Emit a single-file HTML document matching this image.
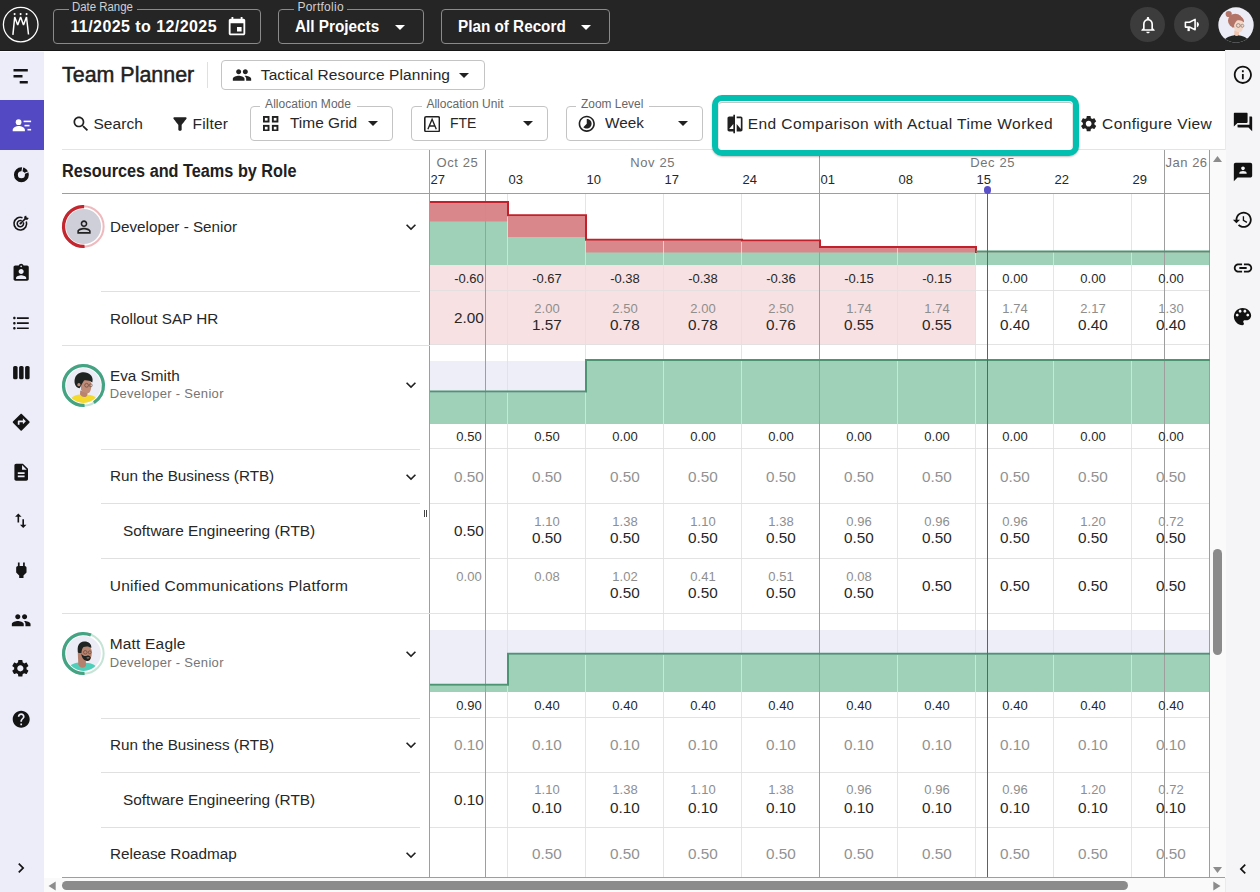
<!DOCTYPE html>
<html><head><meta charset="utf-8"><title>Team Planner</title>
<style>
html,body{margin:0;padding:0;}
body{width:1260px;height:892px;position:relative;overflow:hidden;background:#fff;font-family:"Liberation Sans",sans-serif;}
.t{position:absolute;white-space:nowrap;}
div,svg,span{box-sizing:border-box;}
.n{position:absolute;width:78px;text-align:center;white-space:nowrap;}
</style></head><body>

<div style="position:absolute;left:0px;top:0px;width:1260px;height:51px;background:#252525;border-bottom:1px solid #161616;"></div>
<svg style="position:absolute;left:0px;top:0px" width="44" height="50" viewBox="0 0 44 50"><circle cx="20.700" cy="24.600" r="17.300" fill="none" stroke="#fff" stroke-width="1.300"/><path d="M12.900 34.800L14.700 17L17.700 24.900L20.600 17L23.500 24.900L26.500 17L28.500 34.500" fill="none" stroke="#fff" stroke-width="1.500" stroke-linejoin="bevel"/><circle cx="14.600" cy="14.100" r="1.050" fill="#fff"/><circle cx="20.600" cy="14.100" r="1.050" fill="#fff"/><circle cx="26.600" cy="14.100" r="1.050" fill="#fff"/></svg>
<div style="position:absolute;left:53px;top:9px;width:208px;height:35px;border:1px solid #8a8a8a;border-radius:4px;"></div>
<div style="position:absolute;left:69px;top:8px;width:67.7px;height:4px;background:#252525;"></div>
<span id="t1" class="t" style="left:72.4px;top:0px;font-size:12px;line-height:14px;color:#d0d0d0;transform:scaleX(0.9509);transform-origin:0 50%;">Date Range</span>
<span id="t2" class="t" style="left:70.4px;top:16.6px;font-size:16px;line-height:20px;color:#fff;font-weight:700;letter-spacing:0.436px;">11/2025 to 12/2025</span>
<svg style="position:absolute;left:226.2px;top:16px;" width="22" height="22" viewBox="0 0 24 24"><path fill="#fff" d="M17 12h-5v5h5v-5zM16 1v2H8V1H6v2H5c-1.110 0-1.990.900-1.990 2L3 19c0 1.100.890 2 2 2h14c1.100 0 2-.900 2-2V5c0-1.100-.900-2-2-2h-1V1h-2zm3 18H5V8h14v11z"/></svg>
<div style="position:absolute;left:278px;top:9px;width:146px;height:35px;border:1px solid #8a8a8a;border-radius:4px;"></div>
<div style="position:absolute;left:294px;top:8px;width:53px;height:4px;background:#252525;"></div>
<span id="t3" class="t" style="left:297.4px;top:0px;font-size:12px;line-height:14px;color:#d0d0d0;letter-spacing:0.271px;">Portfolio</span>
<span id="t4" class="t" style="left:295.4px;top:16.6px;font-size:16px;line-height:20px;color:#fff;font-weight:700;transform:scaleX(0.9565);transform-origin:0 50%;">All Projects</span>
<svg style="position:absolute;left:388px;top:14.5px;" width="24" height="24" viewBox="0 0 24 24"><path fill="#fff" d="M7 10l5 5 5-5z"/></svg>
<div style="position:absolute;left:441px;top:9px;width:169px;height:35px;border:1px solid #8a8a8a;border-radius:4px;"></div>
<span id="t5" class="t" style="left:458.4px;top:16.6px;font-size:16px;line-height:20px;color:#fff;font-weight:700;transform:scaleX(0.9539);transform-origin:0 50%;">Plan of Record</span>
<svg style="position:absolute;left:574px;top:14.5px;" width="24" height="24" viewBox="0 0 24 24"><path fill="#fff" d="M7 10l5 5 5-5z"/></svg>
<div style="position:absolute;left:1130px;top:6.9px;width:35px;height:35px;border-radius:50%;background:#3c3c3c;"></div>
<div style="position:absolute;left:1173.9px;top:6.9px;width:35px;height:35px;border-radius:50%;background:#3c3c3c;"></div>
<svg style="position:absolute;left:1138.3px;top:14.8px;" width="20" height="20" viewBox="0 0 24 24"><path fill="#fff" d="M12 22c1.1 0 2-.9 2-2h-4c0 1.1.9 2 2 2zm6-6v-5c0-3.070-1.630-5.640-4.500-6.320V4c0-.830-.670-1.500-1.500-1.500s-1.500.670-1.500 1.500v.680C7.640 5.360 6 7.920 6 11v5l-2 2v1h16v-1l-2-2zm-2 1H8v-6c0-2.480 1.510-4.500 4-4.500s4 2.020 4 4.500v6z"/></svg>
<svg style="position:absolute;left:1184.300px;top:18.300px" width="16" height="14" viewBox="-.5 -.5 16 14"><path d="M.9 3.800H5L10.600 .9V11.200L5 8.600H.9Z" fill="none" stroke="#fff" stroke-width="1.600" stroke-linejoin="round"/><rect x="3" y="8.600" width="2.300" height="4" fill="#fff"/><path d="M12.300 3.300A2.900 2.900 0 0 1 12.300 8.900Z" fill="#fff"/></svg>
<svg style="position:absolute;left:1217.500px;top:6.700px" width="36" height="36" viewBox="0 0 36 36"><defs><clipPath id="avc"><circle cx="18" cy="18" r="17.700"/></clipPath></defs><circle cx="18" cy="18" r="17.700" fill="#ececf6"/><g clip-path="url(#avc)"><path d="M4 37C6 31 11 29.200 15.500 28.500L18 27.300L21.500 28.500C26 29.200 30.500 31 32.500 37Z" fill="#222423"/><path d="M16.300 23.500H21V28C19.500 29.300 17.800 29.300 16.300 28Z" fill="#f0c4ae"/><ellipse cx="17.300" cy="13.800" rx="7.300" ry="7" fill="#b37468"/><path d="M15.500 13C19 10.500 25 11.500 25.300 16.500C25.500 19.500 25 22.500 23.500 24.500C21.500 26 18 25 16.500 22.500Z" fill="#f4d6c6"/><path d="M14.800 21C12.500 16 14 11 18.500 9.500C23 8.500 26.500 11.500 26 15.500C24 13.300 21.500 12.800 19 13.500C17 15 16.300 18 14.800 21Z" fill="#b37468"/><circle cx="10.700" cy="7" r="3.100" fill="#b37468"/><circle cx="20.300" cy="18.500" r="1.900" fill="none" stroke="#5a5a5a" stroke-width=".55"/><circle cx="24.400" cy="18.800" r="1.500" fill="none" stroke="#5a5a5a" stroke-width=".5"/></g></svg>
<div style="position:absolute;left:0px;top:51px;width:44px;height:1px;background:#fafaff;"></div>
<div style="position:absolute;left:0px;top:52px;width:44px;height:840px;background:#ededf9;"></div>
<div style="position:absolute;left:0px;top:100px;width:44px;height:50px;background:#5349c3;"></div>
<svg style="position:absolute;left:7.800px;top:63.900px" width="24" height="24" viewBox="0 0 24 24"><path fill="#141414" d="M5.500 5h14.300v2.500H5.500zM5.500 11h9v2.500h-9zM11.700 17h8.100v2.500h-8.100z"/></svg>
<svg style="position:absolute;left:8.500px;top:112.500px" width="24" height="24" viewBox="0 0 24 24"><g fill="#fff"><circle cx="9.600" cy="9.200" r="2.850"/><path d="M3.700 18.300v-1.300c0-2.600 4-3.900 6.100-3.900s6.100 1.300 6.100 3.900v1.300z"/><rect x="14.600" y="7.600" width="7.500" height="1.600"/><rect x="15.500" y="11.800" width="5" height="1.600"/><rect x="18.500" y="15.900" width="3.600" height="1.600"/></g></svg>
<svg style="position:absolute;left:8.500px;top:163px" width="24" height="24" viewBox="0 0 24 24"><circle cx="12.400" cy="11.700" r="5.500" fill="none" stroke="#141414" stroke-width="3.900"/><path d="M12.400 11.700L13.900 3M12.400 11.700L20.500 8.300" stroke="#ededf9" stroke-width="1.100"/></svg>
<svg style="position:absolute;left:11px;top:214.100px" width="19" height="19" viewBox="0 0 24 24"><g fill="none" stroke="#141414" stroke-width="2"><path d="M19.300 9.500A8 8 0 1 1 14.500 4.700"/><path d="M15.500 10.500A4 4 0 1 1 13.500 8.500"/><path d="M12 12L18.500 5.500" stroke-width="1.900"/></g><path fill="#141414" d="M16.500 3.500l.8 3.200 3.200.8 2-2.300-2.700-.7-.7-2.700z"/><circle cx="12" cy="12" r="1.400" fill="#141414"/></svg>
<svg style="position:absolute;left:10.95px;top:263.35px;" width="20.3" height="20.3" viewBox="0 0 24 24"><path fill="#141414" d="M19 3h-4.180C14.400 1.840 13.300 1 12 1c-1.300 0-2.400.840-2.820 2H5c-1.100 0-2 .900-2 2v14c0 1.100.900 2 2 2h14c1.100 0 2-.900 2-2V5c0-1.100-.900-2-2-2zm-7 0c.550 0 1 .450 1 1s-.450 1-1 1-1-.450-1-1 .450-1 1-1zm0 4c1.660 0 3 1.340 3 3s-1.340 3-3 3-3-1.340-3-3 1.340-3 3-3zm6 12H6v-1.400c0-2 4-3.100 6-3.100s6 1.100 6 3.100V19z"/></svg>
<svg style="position:absolute;left:10.9px;top:312.55px;" width="20.3" height="20.3" viewBox="0 0 24 24"><path fill="#141414" d="M4 10.5c-.83 0-1.5.67-1.5 1.500s.67 1.500 1.500 1.500 1.500-.67 1.500-1.500-.67-1.500-1.500-1.500zm0-6c-.83 0-1.500.67-1.500 1.500S3.170 7.500 4 7.500 5.500 6.830 5.500 6 4.830 4.500 4 4.500zm0 12c-.83 0-1.500.68-1.500 1.500s.68 1.500 1.500 1.500 1.500-.68 1.500-1.500-.67-1.500-1.500-1.500zM7 19h14v-2H7v2zm0-6h14v-2H7v2zm0-8v2h14V5H7z"/></svg>
<svg style="position:absolute;left:8.500px;top:361px" width="24" height="24" viewBox="0 0 24 24"><g fill="#141414"><rect x="4.100" y="5" width="4.500" height="13.300" rx="1.600"/><rect x="10.100" y="5" width="4.500" height="13.300" rx="1.600"/><rect x="16.100" y="5" width="4.500" height="13.300" rx="1.600"/></g></svg>
<svg style="position:absolute;left:10.6px;top:411.8px;" width="20.4" height="20.4" viewBox="0 0 24 24"><path fill="#141414" d="M21.71 11.29l-9-9c-.39-.39-1.02-.39-1.41 0l-9 9c-.39.39-.39 1.020 0 1.410l9 9c.39.39 1.020.39 1.410 0l9-9c.39-.38.39-1.010 0-1.410zM14 14.500V12h-4v3H8v-4c0-.550.450-1 1-1h5V7.500l3.500 3.500-3.500 3.500z"/></svg>
<svg style="position:absolute;left:10.8px;top:461.7px;" width="20.4" height="20.4" viewBox="0 0 24 24"><path fill="#141414" d="M14 2H6c-1.100 0-1.990.900-1.990 2L4 20c0 1.100.890 2 1.990 2H18c1.100 0 2-.900 2-2V8l-6-6zm2 16H8v-2h8v2zm0-4H8v-2h8v2zm-3-5V3.500L18.500 9H13z"/></svg>
<svg style="position:absolute;left:11.25px;top:510.75px;" width="19.5" height="19.5" viewBox="0 0 24 24"><path fill="#141414" d="M9 3L5 6.990h3V14h2V6.990h3L9 3zm7 14.010V10h-2v7.010h-3L15 21l4-3.990h-3z"/></svg>
<svg style="position:absolute;left:10.65px;top:559.55px;" width="20.7" height="20.7" viewBox="0 0 24 24"><path fill="#141414" d="M16.010 7L16 3h-2v4h-4V3H8v4h-.010C7 6.990 6 7.990 6 8.990v5.490L9.500 18v3h5v-3l3.500-3.510v-5.500c0-1-1-2-1.990-1.990z"/></svg>
<svg style="position:absolute;left:11px;top:609.8px;" width="20.4" height="20.4" viewBox="0 0 24 24"><path fill="#141414" d="M16 11c1.66 0 2.99-1.34 2.99-3S17.66 5 16 5c-1.66 0-3 1.34-3 3s1.34 3 3 3zm-8 0c1.66 0 2.99-1.34 2.99-3S9.66 5 8 5C6.34 5 5 6.34 5 8s1.34 3 3 3zm0 2c-2.33 0-7 1.17-7 3.5V19h14v-2.500c0-2.330-4.670-3.500-7-3.500zm8 0c-.29 0-.62.02-.97.05 1.160.840 1.970 1.970 1.970 3.450V19h6v-2.500c0-2.330-4.670-3.500-7-3.500z"/></svg>
<svg style="position:absolute;left:10.45px;top:658.25px;" width="20.7" height="20.7" viewBox="0 0 24 24"><path fill="#141414" d="M19.14 12.94c.04-.3.06-.61.06-.94 0-.32-.02-.64-.07-.94l2.03-1.58c.18-.14.23-.41.12-.61l-1.92-3.32c-.12-.22-.37-.29-.59-.22l-2.39.96c-.5-.38-1.03-.7-1.62-.94l-.36-2.54c-.04-.24-.24-.41-.48-.41h-3.84c-.24 0-.43.17-.47.41l-.36 2.54c-.59.24-1.13.57-1.62.94l-2.39-.96c-.22-.08-.47 0-.59.22L2.74 8.87c-.12.21-.08.47.12.61l2.03 1.58c-.05.3-.09.63-.09.94s.02.64.07.94l-2.03 1.58c-.18.14-.23.41-.12.61l1.92 3.32c.12.22.37.29.59.22l2.39-.96c.5.38 1.03.7 1.62.94l.36 2.54c.05.24.24.41.48.41h3.84c.24 0 .44-.17.47-.41l.36-2.54c.59-.24 1.13-.56 1.62-.94l2.39.96c.22.08.47 0 .59-.22l1.92-3.32c.12-.22.07-.47-.12-.61l-2.01-1.58zM12 15.6c-1.98 0-3.6-1.62-3.6-3.6s1.62-3.6 3.6-3.6 3.6 1.62 3.6 3.6-1.62 3.6-3.6 3.6z"/></svg>
<svg style="position:absolute;left:10.8px;top:709px;" width="20.4" height="20.4" viewBox="0 0 24 24"><path fill="#141414" d="M12 2C6.48 2 2 6.48 2 12s4.48 10 10 10 10-4.48 10-10S17.52 2 12 2zm1 17h-2v-2h2v2zm2.07-7.75l-.9.92C13.45 12.9 13 13.5 13 15h-2v-.5c0-1.1.45-2.1 1.17-2.83l1.24-1.26c.37-.36.59-.86.59-1.41 0-1.1-.9-2-2-2s-2 .9-2 2H8c0-2.21 1.79-4 4-4s4 1.79 4 4c0 .88-.36 1.68-.93 2.25z"/></svg>
<svg style="position:absolute;left:10.85px;top:857.9px;" width="20" height="20" viewBox="0 0 24 24"><path fill="#141414" d="M10 6L8.590 7.410 13.170 12l-4.580 4.590L10 18l6-6z"/></svg>
<div style="position:absolute;left:1225px;top:50px;width:35px;height:842px;background:#f5f5f7;border-left:1px solid #ebebee;"></div>
<svg style="position:absolute;left:1232.05px;top:63.95px;" width="21.7" height="21.7" viewBox="0 0 24 24"><path fill="#111" d="M11 7h2v2h-2zm0 4h2v6h-2zm1-9C6.48 2 2 6.48 2 12s4.48 10 10 10 10-4.48 10-10S17.52 2 12 2zm0 18c-4.41 0-8-3.590-8-8s3.590-8 8-8 8 3.590 8 8-3.590 8-8 8z"/></svg>
<svg style="position:absolute;left:1231.9px;top:111.4px;" width="22" height="22" viewBox="0 0 24 24"><path fill="#111" d="M21 6h-2v9H6v2c0 .55.45 1 1 1h11l4 4V7c0-.55-.45-1-1-1zm-4 6V3c0-.55-.45-1-1-1H3c-.55 0-1 .45-1 1v14l4-4h10c.55 0 1-.45 1-1z"/></svg>
<svg style="position:absolute;left:1231.9px;top:160.6px;" width="22" height="22" viewBox="0 0 24 24"><path fill="#111" d="M20 2H4c-1.1 0-2 .9-2 2v18l4-4h14c1.1 0 2-.9 2-2V4c0-1.1-.9-2-2-2zm-8 4c1.1 0 2 .9 2 2s-.9 2-2 2-2-.9-2-2 .9-2 2-2zm4 8H8v-.57c0-.81.48-1.53 1.22-1.85.85-.37 1.79-.58 2.78-.58.99 0 1.93.21 2.78.58.74.32 1.22 1.04 1.22 1.850V14z"/></svg>
<svg style="position:absolute;left:1232.15px;top:209.35px;" width="21.5" height="21.5" viewBox="0 0 24 24"><path fill="#111" d="M13 3c-4.97 0-9 4.03-9 9H1l3.89 3.89.07.14L9 12H6c0-3.87 3.13-7 7-7s7 3.13 7 7-3.13 7-7 7c-1.93 0-3.68-.79-4.94-2.06l-1.42 1.42C8.27 19.99 10.51 21 13 21c4.97 0 9-4.03 9-9s-4.03-9-9-9zm-1 5v5l4.28 2.54.72-1.21-3.5-2.08V8H12z"/></svg>
<svg style="position:absolute;left:1231.9px;top:257px;" width="22" height="22" viewBox="0 0 24 24"><path fill="#111" d="M3.9 12c0-1.71 1.39-3.1 3.1-3.1h4V7H7c-2.76 0-5 2.24-5 5s2.24 5 5 5h4v-1.900H7c-1.710 0-3.100-1.390-3.100-3.100zM8 13h8v-2H8v2zm9-6h-4v1.900h4c1.710 0 3.100 1.390 3.100 3.100s-1.390 3.100-3.100 3.100h-4V17h4c2.760 0 5-2.240 5-5s-2.240-5-5-5z"/></svg>
<svg style="position:absolute;left:1231.4px;top:305.3px;" width="23" height="23" viewBox="0 0 24 24"><path fill="#111" d="M12 3c-4.97 0-9 4.03-9 9s4.03 9 9 9c.83 0 1.5-.67 1.5-1.5 0-.39-.15-.74-.39-1.01-.23-.26-.38-.61-.38-.99 0-.83.67-1.5 1.5-1.500H16c2.760 0 5-2.240 5-5 0-4.420-4.030-8-9-8zm-5.500 9c-.830 0-1.500-.670-1.500-1.500S5.670 9 6.500 9 8 9.670 8 10.500 7.330 12 6.500 12zm3-4C8.670 8 8 7.330 8 6.500S8.670 5 9.500 5s1.500.670 1.500 1.500S10.330 8 9.500 8zm5 0c-.830 0-1.500-.670-1.500-1.500S13.670 5 14.500 5s1.500.670 1.500 1.500S15.330 8 14.500 8zm3 4c-.830 0-1.500-.670-1.500-1.500S16.670 9 17.500 9s1.500.670 1.500 1.500-.670 1.500-1.500 1.500z"/></svg>
<svg style="position:absolute;left:1233.1px;top:859.1px;" width="20" height="20" viewBox="0 0 24 24"><path fill="#111" d="M15.410 7.410L14 6l-6 6 6 6 1.410-1.410L10.830 12z"/></svg>
<span id="t6" class="t" style="left:62.1px;top:60.2px;font-size:22.5px;line-height:30px;color:#212121;transform:scaleX(0.9523);transform-origin:0 50%;-webkit-text-stroke:0.500px #212121;">Team Planner</span>
<div style="position:absolute;left:207px;top:62px;width:1px;height:26px;background:#e0e0e0;"></div>
<div style="position:absolute;left:221px;top:60px;width:264px;height:30px;border:1px solid #c4c4c4;border-radius:4px;"></div>
<svg style="position:absolute;left:232px;top:64.5px;" width="20" height="20" viewBox="0 0 24 24"><path fill="#212121" d="M16 11c1.66 0 2.99-1.34 2.99-3S17.66 5 16 5c-1.66 0-3 1.34-3 3s1.34 3 3 3zm-8 0c1.66 0 2.99-1.34 2.99-3S9.66 5 8 5C6.34 5 5 6.34 5 8s1.34 3 3 3zm0 2c-2.33 0-7 1.17-7 3.5V19h14v-2.500c0-2.330-4.670-3.500-7-3.500zm8 0c-.29 0-.62.02-.97.05 1.160.840 1.970 1.970 1.970 3.450V19h6v-2.500c0-2.330-4.670-3.500-7-3.500z"/></svg>
<span id="t7" class="t" style="left:260.8px;top:64.5px;font-size:15.5px;line-height:20px;color:#272727;letter-spacing:0.089px;">Tactical Resource Planning</span>
<svg style="position:absolute;left:452px;top:63px;" width="24" height="24" viewBox="0 0 24 24"><path fill="#212121" d="M7 10l5 5 5-5z"/></svg>
<svg style="position:absolute;left:71px;top:114px;" width="20" height="20" viewBox="0 0 24 24"><path fill="#212121" d="M15.5 14h-.79l-.28-.27C15.41 12.59 16 11.11 16 9.5 16 5.91 13.09 3 9.5 3S3 5.91 3 9.5 5.91 16 9.5 16c1.61 0 3.09-.59 4.23-1.57l.27.28v.79l5 4.99L20.49 19l-4.99-5zm-6 0C7.01 14 5 11.99 5 9.5S7.01 5 9.5 5 14 7.01 14 9.5 11.99 14 9.5 14z"/></svg>
<span id="t8" class="t" style="left:93.4px;top:114px;font-size:15.5px;line-height:20px;color:#272727;letter-spacing:0.075px;">Search</span>
<svg style="position:absolute;left:169.7px;top:114px;" width="20" height="20" viewBox="0 0 24 24"><path fill="#212121" d="M4.25 5.61C6.27 8.2 10 13 10 13v6c0 .55.45 1 1 1h2c.55 0 1-.45 1-1v-6s3.72-4.8 5.74-7.39c.51-.66.04-1.61-.79-1.61H5.04c-.83 0-1.3.95-.79 1.61z"/></svg>
<span id="t9" class="t" style="left:192.6px;top:114px;font-size:15.5px;line-height:20px;color:#272727;letter-spacing:0.169px;">Filter</span>
<div style="position:absolute;left:250px;top:106px;width:143px;height:34.5px;border:1px solid #c4c4c4;border-radius:4px;"></div>
<div style="position:absolute;left:260.2px;top:105px;width:96.7px;height:4px;background:#fff;"></div>
<span id="t10" class="t" style="left:265.1px;top:96.5px;font-size:12px;line-height:14px;color:#666;letter-spacing:0.036px;">Allocation Mode</span>
<svg style="position:absolute;left:263.300px;top:116px" width="15.400" height="15.400" viewBox="0 0 15.400 15.400"><g fill="none" stroke="#212121" stroke-width="1.900"><rect x=".95" y=".95" width="4.600" height="4.600"/><rect x="9.850" y=".95" width="4.600" height="4.600"/><rect x=".95" y="9.850" width="4.600" height="4.600"/><rect x="9.850" y="9.850" width="4.600" height="4.600"/></g></svg>
<span id="t11" class="t" style="left:290.1px;top:112.7px;font-size:15.5px;line-height:20px;color:#272727;transform:scaleX(0.9960);transform-origin:0 50%;">Time Grid</span>
<svg style="position:absolute;left:361px;top:110.7px;" width="24" height="24" viewBox="0 0 24 24"><path fill="#212121" d="M7 10l5 5 5-5z"/></svg>
<div style="position:absolute;left:411px;top:106px;width:136.5px;height:34.5px;border:1px solid #c4c4c4;border-radius:4px;"></div>
<div style="position:absolute;left:421.5px;top:105px;width:87.9px;height:4px;background:#fff;"></div>
<span id="t12" class="t" style="left:426.4px;top:96.5px;font-size:12px;line-height:14px;color:#666;letter-spacing:0.027px;">Allocation Unit</span>
<svg style="position:absolute;left:423.800px;top:115.700px" width="16.200" height="16.300" viewBox="0 0 16.200 16.300"><rect x=".8" y=".8" width="14.600" height="14.700" rx="1.300" fill="none" stroke="#212121" stroke-width="1.600"/><path d="M3.900 13.300L8.100 3.300L12.300 13.300M5.400 10H10.800" fill="none" stroke="#212121" stroke-width="1.350"/></svg>
<span id="t13" class="t" style="left:450.4px;top:112.7px;font-size:15.5px;line-height:20px;color:#272727;transform:scaleX(0.9016);transform-origin:0 50%;">FTE</span>
<svg style="position:absolute;left:516px;top:110.7px;" width="24" height="24" viewBox="0 0 24 24"><path fill="#212121" d="M7 10l5 5 5-5z"/></svg>
<div style="position:absolute;left:565.5px;top:106px;width:137.5px;height:34.5px;border:1px solid #c4c4c4;border-radius:4px;"></div>
<div style="position:absolute;left:576.3px;top:105px;width:73.1px;height:4px;background:#fff;"></div>
<span id="t14" class="t" style="left:581.2px;top:96.5px;font-size:12px;line-height:14px;color:#666;transform:scaleX(0.9936);transform-origin:0 50%;">Zoom Level</span>
<svg style="position:absolute;left:577.05px;top:113.85px;" width="19.5" height="19.5" viewBox="0 0 24 24"><path fill="#212121" d="M16.24 7.76C15.07 6.59 13.54 6 12 6v6l-4.24 4.24c2.34 2.34 6.14 2.34 8.49 0 2.34-2.34 2.34-6.14-.01-8.480zM12 2C6.480 2 2 6.480 2 12s4.480 10 10 10 10-4.480 10-10S17.520 2 12 2zm0 18c-4.420 0-8-3.580-8-8s3.580-8 8-8 8 3.580 8 8-3.580 8-8 8z"/></svg>
<span id="t15" class="t" style="left:604.8px;top:112.7px;font-size:15.5px;line-height:20px;color:#272727;transform:scaleX(0.9862);transform-origin:0 50%;">Week</span>
<svg style="position:absolute;left:671px;top:110.7px;" width="24" height="24" viewBox="0 0 24 24"><path fill="#212121" d="M7 10l5 5 5-5z"/></svg>
<div style="position:absolute;left:712px;top:95px;width:367px;height:60.5px;border:6px solid #02bfb0;border-top-width:6.800px;border-bottom-width:6.400px;border-radius:10px;background:#fff;z-index:5;box-shadow:0 1px 2px rgba(0,0,0,.25);"></div>
<div style="position:absolute;left:718px;top:101.5px;width:355px;height:47.5px;border:1px solid rgba(90,90,90,.35);border-bottom-color:transparent;border-left-color:rgba(90,90,90,.15);border-right-color:rgba(90,90,90,.15);border-radius:4px;z-index:6;"></div>
<svg style="position:absolute;left:724.8px;top:113.8px;z-index:7;" width="20" height="20" viewBox="0 0 24 24"><path fill="#212121" d="M10 3H5c-1.100 0-2 .900-2 2v14c0 1.100.900 2 2 2h5v2h2V1h-2v2zm0 15H5l5-6v6zm9-15h-5v2h5v13l-5-6v9h5c1.100 0 2-.900 2-2V5c0-1.100-.900-2-2-2z"/></svg>
<span id="t16" class="t" style="left:747.8px;top:114px;font-size:15.5px;line-height:20px;color:#272727;letter-spacing:0.422px;z-index:7;">End Comparison with Actual Time Worked</span>
<svg style="position:absolute;left:1079.35px;top:114.15px;" width="19.3" height="19.3" viewBox="0 0 24 24"><path fill="#212121" d="M19.14 12.94c.04-.3.06-.61.06-.94 0-.32-.02-.64-.07-.94l2.03-1.58c.18-.14.23-.41.12-.61l-1.92-3.32c-.12-.22-.37-.29-.59-.22l-2.39.96c-.5-.38-1.03-.7-1.62-.94l-.36-2.54c-.04-.24-.24-.41-.48-.41h-3.84c-.24 0-.43.17-.47.41l-.36 2.54c-.59.24-1.13.57-1.62.94l-2.39-.96c-.22-.08-.47 0-.59.22L2.74 8.87c-.12.21-.08.47.12.61l2.03 1.58c-.05.3-.09.63-.09.94s.02.64.07.94l-2.03 1.58c-.18.14-.23.41-.12.61l1.92 3.32c.12.22.37.29.59.22l2.39-.96c.5.38 1.03.7 1.62.94l.36 2.54c.05.24.24.41.48.41h3.84c.24 0 .44-.17.47-.41l.36-2.54c.59-.24 1.13-.56 1.62-.94l2.39.96c.22.08.47 0 .59-.22l1.92-3.32c.12-.22.07-.47-.12-.61l-2.01-1.58zM12 15.6c-1.98 0-3.6-1.62-3.6-3.6s1.62-3.6 3.6-3.6 3.6 1.62 3.6 3.6-1.62 3.6-3.6 3.6z"/></svg>
<span id="t17" class="t" style="left:1102.1px;top:114px;font-size:15.5px;line-height:20px;color:#272727;letter-spacing:0.366px;">Configure View</span>
<div style="position:absolute;left:62px;top:149px;width:1163px;height:1px;background:#e4e4e4;"></div>
<span id="t18" class="t" style="left:62px;top:158.5px;font-size:17.5px;line-height:24px;color:#212121;font-weight:700;transform:scaleX(0.9289);transform-origin:0 50%;">Resources and Teams by Role</span>
<div style="position:absolute;left:62px;top:193px;width:1148px;height:1px;background:#9e9e9e;"></div>
<span id="t19" class="t" style="left:436.6px;top:154.5px;font-size:13px;line-height:16px;color:#757575;letter-spacing:0.581px;">Oct 25</span>
<span id="t20" class="t" style="left:630.2px;top:154.5px;font-size:13px;line-height:16px;color:#757575;letter-spacing:0.619px;">Nov 25</span>
<span id="t21" class="t" style="left:970.2px;top:154.5px;font-size:13px;line-height:16px;color:#757575;letter-spacing:0.619px;">Dec 25</span>
<span id="t22" class="t" style="left:1165.6px;top:154.5px;font-size:13px;line-height:16px;color:#757575;letter-spacing:0.491px;">Jan 26</span>
<span id="t23" class="t" style="left:430.5px;top:172px;font-size:13px;line-height:16px;color:#272727;">27</span>
<span id="t24" class="t" style="left:508.5px;top:172px;font-size:13px;line-height:16px;color:#272727;">03</span>
<span id="t25" class="t" style="left:586.5px;top:172px;font-size:13px;line-height:16px;color:#272727;">10</span>
<span id="t26" class="t" style="left:664.5px;top:172px;font-size:13px;line-height:16px;color:#272727;">17</span>
<span id="t27" class="t" style="left:742.5px;top:172px;font-size:13px;line-height:16px;color:#272727;">24</span>
<span id="t28" class="t" style="left:820.5px;top:172px;font-size:13px;line-height:16px;color:#272727;">01</span>
<span id="t29" class="t" style="left:898.5px;top:172px;font-size:13px;line-height:16px;color:#272727;">08</span>
<span id="t30" class="t" style="left:976.5px;top:172px;font-size:13px;line-height:16px;color:#272727;">15</span>
<span id="t31" class="t" style="left:1054.5px;top:172px;font-size:13px;line-height:16px;color:#272727;">22</span>
<span id="t32" class="t" style="left:1132.5px;top:172px;font-size:13px;line-height:16px;color:#272727;">29</span>
<div style="position:absolute;left:430px;top:265px;width:546px;height:80px;background:#f7e1e3;"></div>
<svg style="position:absolute;left:0;top:0" width="1260" height="892" viewBox="0 0 1260 892"><path d="M430 265L430 203L508 203L508 216.33L586 216.33L586 240.82L664 240.82L664 240.82L742 240.82L742 241.44L820 241.44L820 247.95L898 247.95L898 247.95L976 247.95L976 252.6L1054 252.6L1054 252.6L1132 252.6L1132 252.6L1210 252.6L1210 265Z" fill="#da878b"/><path d="M430 265L430 221.6L508 221.6L508 237.1L586 237.1L586 252.6L664 252.6L664 252.6L742 252.6L742 252.6L820 252.6L820 252.6L898 252.6L898 252.6L976 252.6L976 252.6L1054 252.6L1054 252.6L1132 252.6L1132 252.6L1210 252.6L1210 265Z" fill="#9fd1b8"/><rect x="430" y="361" width="780" height="63" fill="#eeeef9"/><path d="M430 424L430 392.5L508 392.5L508 392.5L586 392.5L586 361L664 361L664 361L742 361L742 361L820 361L820 361L898 361L898 361L976 361L976 361L1054 361L1054 361L1132 361L1132 361L1210 361L1210 424Z" fill="#9fd1b8"/><rect x="430" y="630" width="780" height="62" fill="#eeeef9"/><path d="M430 692L430 685.8L508 685.8L508 654.8L586 654.8L586 654.8L664 654.8L664 654.8L742 654.8L742 654.8L820 654.8L820 654.8L898 654.8L898 654.8L976 654.8L976 654.8L1054 654.8L1054 654.8L1132 654.8L1132 654.8L1210 654.8L1210 692Z" fill="#9fd1b8"/></svg>
<div style="position:absolute;left:430px;top:290px;width:780px;height:1px;background:#e0e0e0;opacity:.9;"></div>
<div style="position:absolute;left:430px;top:344px;width:780px;height:1px;background:#e0e0e0;opacity:.9;"></div>
<div style="position:absolute;left:430px;top:448px;width:780px;height:1px;background:#e0e0e0;opacity:.9;"></div>
<div style="position:absolute;left:430px;top:503px;width:780px;height:1px;background:#e0e0e0;opacity:.9;"></div>
<div style="position:absolute;left:430px;top:558px;width:780px;height:1px;background:#e0e0e0;opacity:.9;"></div>
<div style="position:absolute;left:430px;top:613px;width:780px;height:1px;background:#e0e0e0;opacity:.9;"></div>
<div style="position:absolute;left:430px;top:717px;width:780px;height:1px;background:#e0e0e0;opacity:.9;"></div>
<div style="position:absolute;left:430px;top:772px;width:780px;height:1px;background:#e0e0e0;opacity:.9;"></div>
<div style="position:absolute;left:430px;top:827px;width:780px;height:1px;background:#e0e0e0;opacity:.9;"></div>
<div style="position:absolute;left:507px;top:194px;width:1px;height:684px;background:rgba(224,224,224,.85);"></div>
<div style="position:absolute;left:585px;top:194px;width:1px;height:684px;background:rgba(224,224,224,.85);"></div>
<div style="position:absolute;left:663px;top:194px;width:1px;height:684px;background:rgba(224,224,224,.85);"></div>
<div style="position:absolute;left:741px;top:194px;width:1px;height:684px;background:rgba(224,224,224,.85);"></div>
<div style="position:absolute;left:897px;top:194px;width:1px;height:684px;background:rgba(224,224,224,.85);"></div>
<div style="position:absolute;left:975px;top:194px;width:1px;height:684px;background:rgba(224,224,224,.85);"></div>
<div style="position:absolute;left:1053px;top:194px;width:1px;height:684px;background:rgba(224,224,224,.85);"></div>
<div style="position:absolute;left:1131px;top:194px;width:1px;height:684px;background:rgba(224,224,224,.85);"></div>
<div style="position:absolute;left:429px;top:150px;width:1px;height:728px;background:#9e9e9e;"></div>
<div style="position:absolute;left:485px;top:150px;width:1px;height:728px;background:#9e9e9e;"></div>
<div style="position:absolute;left:819px;top:150px;width:1px;height:728px;background:#9e9e9e;"></div>
<div style="position:absolute;left:1164px;top:150px;width:1px;height:728px;background:#9e9e9e;"></div>
<div style="position:absolute;left:1209px;top:150px;width:1px;height:728px;background:#9e9e9e;"></div>
<svg style="position:absolute;left:0;top:0" width="1260" height="892" viewBox="0 0 1260 892"><path d="M430 202L508 202L508 215.33L586 215.33L586 239.82L664 239.82L664 239.82L742 239.82L742 240.44L820 240.44L820 246.95L898 246.95L898 246.95L976 246.95L976 253.1" fill="none" stroke="#c1212a" stroke-width="2" stroke-linejoin="miter"/><path d="M976 251.6L1054 251.6L1054 251.6L1132 251.6L1132 251.6L1210 251.6" fill="none" stroke="#4d9473" stroke-width="2"/><path d="M430 391.5L508 391.5L508 391.5L586 391.5L586 360L664 360L664 360L742 360L742 360L820 360L820 360L898 360L898 360L976 360L976 360L1054 360L1054 360L1132 360L1132 360L1210 360" fill="none" stroke="#4d9473" stroke-width="2"/><path d="M430 684.8L508 684.8L508 653.8L586 653.8L586 653.8L664 653.8L664 653.8L742 653.8L742 653.8L820 653.8L820 653.8L898 653.8L898 653.8L976 653.8L976 653.8L1054 653.8L1054 653.8L1132 653.8L1132 653.8L1210 653.8" fill="none" stroke="#4d9473" stroke-width="2"/></svg>
<div style="position:absolute;left:987px;top:190px;width:1px;height:688px;background:#5a50c8;"></div>
<div style="position:absolute;left:983.7px;top:186.4px;width:7.6px;height:7.6px;background:#5a50c8;border-radius:50%;"></div>
<span class="n" style="left:430px;top:270px;font-size:13px;line-height:17px;color:#272727;">-0.60</span>
<span class="n" style="left:508px;top:270px;font-size:13px;line-height:17px;color:#272727;">-0.67</span>
<span class="n" style="left:586px;top:270px;font-size:13px;line-height:17px;color:#272727;">-0.38</span>
<span class="n" style="left:664px;top:270px;font-size:13px;line-height:17px;color:#272727;">-0.38</span>
<span class="n" style="left:742px;top:270px;font-size:13px;line-height:17px;color:#272727;">-0.36</span>
<span class="n" style="left:820px;top:270px;font-size:13px;line-height:17px;color:#272727;">-0.15</span>
<span class="n" style="left:898px;top:270px;font-size:13px;line-height:17px;color:#272727;">-0.15</span>
<span class="n" style="left:976px;top:270px;font-size:13px;line-height:17px;color:#272727;">0.00</span>
<span class="n" style="left:1054px;top:270px;font-size:13px;line-height:17px;color:#272727;">0.00</span>
<span class="n" style="left:1132px;top:270px;font-size:13px;line-height:17px;color:#272727;">0.00</span>
<span class="n" style="left:430px;top:308px;font-size:15.3px;line-height:20px;color:#272727;">2.00</span>
<span class="n" style="left:508px;top:299.8px;font-size:13px;line-height:17px;color:#8e8e8e;">2.00</span>
<span class="n" style="left:508px;top:315px;font-size:15.3px;line-height:20px;color:#272727;">1.57</span>
<span class="n" style="left:586px;top:299.8px;font-size:13px;line-height:17px;color:#8e8e8e;">2.50</span>
<span class="n" style="left:586px;top:315px;font-size:15.3px;line-height:20px;color:#272727;">0.78</span>
<span class="n" style="left:664px;top:299.8px;font-size:13px;line-height:17px;color:#8e8e8e;">2.00</span>
<span class="n" style="left:664px;top:315px;font-size:15.3px;line-height:20px;color:#272727;">0.78</span>
<span class="n" style="left:742px;top:299.8px;font-size:13px;line-height:17px;color:#8e8e8e;">2.50</span>
<span class="n" style="left:742px;top:315px;font-size:15.3px;line-height:20px;color:#272727;">0.76</span>
<span class="n" style="left:820px;top:299.8px;font-size:13px;line-height:17px;color:#8e8e8e;">1.74</span>
<span class="n" style="left:820px;top:315px;font-size:15.3px;line-height:20px;color:#272727;">0.55</span>
<span class="n" style="left:898px;top:299.8px;font-size:13px;line-height:17px;color:#8e8e8e;">1.74</span>
<span class="n" style="left:898px;top:315px;font-size:15.3px;line-height:20px;color:#272727;">0.55</span>
<span class="n" style="left:976px;top:299.8px;font-size:13px;line-height:17px;color:#8e8e8e;">1.74</span>
<span class="n" style="left:976px;top:315px;font-size:15.3px;line-height:20px;color:#272727;">0.40</span>
<span class="n" style="left:1054px;top:299.8px;font-size:13px;line-height:17px;color:#8e8e8e;">2.17</span>
<span class="n" style="left:1054px;top:315px;font-size:15.3px;line-height:20px;color:#272727;">0.40</span>
<span class="n" style="left:1132px;top:299.8px;font-size:13px;line-height:17px;color:#8e8e8e;">1.30</span>
<span class="n" style="left:1132px;top:315px;font-size:15.3px;line-height:20px;color:#272727;">0.40</span>
<span class="n" style="left:430px;top:428px;font-size:13px;line-height:17px;color:#272727;">0.50</span>
<span class="n" style="left:508px;top:428px;font-size:13px;line-height:17px;color:#272727;">0.50</span>
<span class="n" style="left:586px;top:428px;font-size:13px;line-height:17px;color:#272727;">0.00</span>
<span class="n" style="left:664px;top:428px;font-size:13px;line-height:17px;color:#272727;">0.00</span>
<span class="n" style="left:742px;top:428px;font-size:13px;line-height:17px;color:#272727;">0.00</span>
<span class="n" style="left:820px;top:428px;font-size:13px;line-height:17px;color:#272727;">0.00</span>
<span class="n" style="left:898px;top:428px;font-size:13px;line-height:17px;color:#272727;">0.00</span>
<span class="n" style="left:976px;top:428px;font-size:13px;line-height:17px;color:#272727;">0.00</span>
<span class="n" style="left:1054px;top:428px;font-size:13px;line-height:17px;color:#272727;">0.00</span>
<span class="n" style="left:1132px;top:428px;font-size:13px;line-height:17px;color:#272727;">0.00</span>
<span class="n" style="left:430px;top:466.8px;font-size:15.3px;line-height:20px;color:#929292;">0.50</span>
<span class="n" style="left:508px;top:466.8px;font-size:15.3px;line-height:20px;color:#929292;">0.50</span>
<span class="n" style="left:586px;top:466.8px;font-size:15.3px;line-height:20px;color:#929292;">0.50</span>
<span class="n" style="left:664px;top:466.8px;font-size:15.3px;line-height:20px;color:#929292;">0.50</span>
<span class="n" style="left:742px;top:466.8px;font-size:15.3px;line-height:20px;color:#929292;">0.50</span>
<span class="n" style="left:820px;top:466.8px;font-size:15.3px;line-height:20px;color:#929292;">0.50</span>
<span class="n" style="left:898px;top:466.8px;font-size:15.3px;line-height:20px;color:#929292;">0.50</span>
<span class="n" style="left:976px;top:466.8px;font-size:15.3px;line-height:20px;color:#929292;">0.50</span>
<span class="n" style="left:1054px;top:466.8px;font-size:15.3px;line-height:20px;color:#929292;">0.50</span>
<span class="n" style="left:1132px;top:466.8px;font-size:15.3px;line-height:20px;color:#929292;">0.50</span>
<span class="n" style="left:430px;top:521px;font-size:15.3px;line-height:20px;color:#272727;">0.50</span>
<span class="n" style="left:508px;top:512.8px;font-size:13px;line-height:17px;color:#8e8e8e;">1.10</span>
<span class="n" style="left:508px;top:528.2px;font-size:15.3px;line-height:20px;color:#272727;">0.50</span>
<span class="n" style="left:586px;top:512.8px;font-size:13px;line-height:17px;color:#8e8e8e;">1.38</span>
<span class="n" style="left:586px;top:528.2px;font-size:15.3px;line-height:20px;color:#272727;">0.50</span>
<span class="n" style="left:664px;top:512.8px;font-size:13px;line-height:17px;color:#8e8e8e;">1.10</span>
<span class="n" style="left:664px;top:528.2px;font-size:15.3px;line-height:20px;color:#272727;">0.50</span>
<span class="n" style="left:742px;top:512.8px;font-size:13px;line-height:17px;color:#8e8e8e;">1.38</span>
<span class="n" style="left:742px;top:528.2px;font-size:15.3px;line-height:20px;color:#272727;">0.50</span>
<span class="n" style="left:820px;top:512.8px;font-size:13px;line-height:17px;color:#8e8e8e;">0.96</span>
<span class="n" style="left:820px;top:528.2px;font-size:15.3px;line-height:20px;color:#272727;">0.50</span>
<span class="n" style="left:898px;top:512.8px;font-size:13px;line-height:17px;color:#8e8e8e;">0.96</span>
<span class="n" style="left:898px;top:528.2px;font-size:15.3px;line-height:20px;color:#272727;">0.50</span>
<span class="n" style="left:976px;top:512.8px;font-size:13px;line-height:17px;color:#8e8e8e;">0.96</span>
<span class="n" style="left:976px;top:528.2px;font-size:15.3px;line-height:20px;color:#272727;">0.50</span>
<span class="n" style="left:1054px;top:512.8px;font-size:13px;line-height:17px;color:#8e8e8e;">1.20</span>
<span class="n" style="left:1054px;top:528.2px;font-size:15.3px;line-height:20px;color:#272727;">0.50</span>
<span class="n" style="left:1132px;top:512.8px;font-size:13px;line-height:17px;color:#8e8e8e;">0.72</span>
<span class="n" style="left:1132px;top:528.2px;font-size:15.3px;line-height:20px;color:#272727;">0.50</span>
<span class="n" style="left:430px;top:567.8px;font-size:13px;line-height:17px;color:#8e8e8e;">0.00</span>
<span class="n" style="left:508px;top:567.8px;font-size:13px;line-height:17px;color:#8e8e8e;">0.08</span>
<span class="n" style="left:586px;top:567.8px;font-size:13px;line-height:17px;color:#8e8e8e;">1.02</span>
<span class="n" style="left:586px;top:583px;font-size:15.3px;line-height:20px;color:#272727;">0.50</span>
<span class="n" style="left:664px;top:567.8px;font-size:13px;line-height:17px;color:#8e8e8e;">0.41</span>
<span class="n" style="left:664px;top:583px;font-size:15.3px;line-height:20px;color:#272727;">0.50</span>
<span class="n" style="left:742px;top:567.8px;font-size:13px;line-height:17px;color:#8e8e8e;">0.51</span>
<span class="n" style="left:742px;top:583px;font-size:15.3px;line-height:20px;color:#272727;">0.50</span>
<span class="n" style="left:820px;top:567.8px;font-size:13px;line-height:17px;color:#8e8e8e;">0.08</span>
<span class="n" style="left:820px;top:583px;font-size:15.3px;line-height:20px;color:#272727;">0.50</span>
<span class="n" style="left:898px;top:576px;font-size:15.3px;line-height:20px;color:#272727;">0.50</span>
<span class="n" style="left:976px;top:576px;font-size:15.3px;line-height:20px;color:#272727;">0.50</span>
<span class="n" style="left:1054px;top:576px;font-size:15.3px;line-height:20px;color:#272727;">0.50</span>
<span class="n" style="left:1132px;top:576px;font-size:15.3px;line-height:20px;color:#272727;">0.50</span>
<span class="n" style="left:430px;top:696.8px;font-size:13px;line-height:17px;color:#272727;">0.90</span>
<span class="n" style="left:508px;top:696.8px;font-size:13px;line-height:17px;color:#272727;">0.40</span>
<span class="n" style="left:586px;top:696.8px;font-size:13px;line-height:17px;color:#272727;">0.40</span>
<span class="n" style="left:664px;top:696.8px;font-size:13px;line-height:17px;color:#272727;">0.40</span>
<span class="n" style="left:742px;top:696.8px;font-size:13px;line-height:17px;color:#272727;">0.40</span>
<span class="n" style="left:820px;top:696.8px;font-size:13px;line-height:17px;color:#272727;">0.40</span>
<span class="n" style="left:898px;top:696.8px;font-size:13px;line-height:17px;color:#272727;">0.40</span>
<span class="n" style="left:976px;top:696.8px;font-size:13px;line-height:17px;color:#272727;">0.40</span>
<span class="n" style="left:1054px;top:696.8px;font-size:13px;line-height:17px;color:#272727;">0.40</span>
<span class="n" style="left:1132px;top:696.8px;font-size:13px;line-height:17px;color:#272727;">0.40</span>
<span class="n" style="left:430px;top:734.6px;font-size:15.3px;line-height:20px;color:#929292;">0.10</span>
<span class="n" style="left:508px;top:734.6px;font-size:15.3px;line-height:20px;color:#929292;">0.10</span>
<span class="n" style="left:586px;top:734.6px;font-size:15.3px;line-height:20px;color:#929292;">0.10</span>
<span class="n" style="left:664px;top:734.6px;font-size:15.3px;line-height:20px;color:#929292;">0.10</span>
<span class="n" style="left:742px;top:734.6px;font-size:15.3px;line-height:20px;color:#929292;">0.10</span>
<span class="n" style="left:820px;top:734.6px;font-size:15.3px;line-height:20px;color:#929292;">0.10</span>
<span class="n" style="left:898px;top:734.6px;font-size:15.3px;line-height:20px;color:#929292;">0.10</span>
<span class="n" style="left:976px;top:734.6px;font-size:15.3px;line-height:20px;color:#929292;">0.10</span>
<span class="n" style="left:1054px;top:734.6px;font-size:15.3px;line-height:20px;color:#929292;">0.10</span>
<span class="n" style="left:1132px;top:734.6px;font-size:15.3px;line-height:20px;color:#929292;">0.10</span>
<span class="n" style="left:430px;top:789.5px;font-size:15.3px;line-height:20px;color:#272727;">0.10</span>
<span class="n" style="left:508px;top:781px;font-size:13px;line-height:17px;color:#8e8e8e;">1.10</span>
<span class="n" style="left:508px;top:797.7px;font-size:15.3px;line-height:20px;color:#272727;">0.10</span>
<span class="n" style="left:586px;top:781px;font-size:13px;line-height:17px;color:#8e8e8e;">1.38</span>
<span class="n" style="left:586px;top:797.7px;font-size:15.3px;line-height:20px;color:#272727;">0.10</span>
<span class="n" style="left:664px;top:781px;font-size:13px;line-height:17px;color:#8e8e8e;">1.10</span>
<span class="n" style="left:664px;top:797.7px;font-size:15.3px;line-height:20px;color:#272727;">0.10</span>
<span class="n" style="left:742px;top:781px;font-size:13px;line-height:17px;color:#8e8e8e;">1.38</span>
<span class="n" style="left:742px;top:797.7px;font-size:15.3px;line-height:20px;color:#272727;">0.10</span>
<span class="n" style="left:820px;top:781px;font-size:13px;line-height:17px;color:#8e8e8e;">0.96</span>
<span class="n" style="left:820px;top:797.7px;font-size:15.3px;line-height:20px;color:#272727;">0.10</span>
<span class="n" style="left:898px;top:781px;font-size:13px;line-height:17px;color:#8e8e8e;">0.96</span>
<span class="n" style="left:898px;top:797.7px;font-size:15.3px;line-height:20px;color:#272727;">0.10</span>
<span class="n" style="left:976px;top:781px;font-size:13px;line-height:17px;color:#8e8e8e;">0.96</span>
<span class="n" style="left:976px;top:797.7px;font-size:15.3px;line-height:20px;color:#272727;">0.10</span>
<span class="n" style="left:1054px;top:781px;font-size:13px;line-height:17px;color:#8e8e8e;">1.20</span>
<span class="n" style="left:1054px;top:797.7px;font-size:15.3px;line-height:20px;color:#272727;">0.10</span>
<span class="n" style="left:1132px;top:781px;font-size:13px;line-height:17px;color:#8e8e8e;">0.72</span>
<span class="n" style="left:1132px;top:797.7px;font-size:15.3px;line-height:20px;color:#272727;">0.10</span>
<span class="n" style="left:508px;top:844.2px;font-size:15.3px;line-height:20px;color:#929292;">0.50</span>
<span class="n" style="left:586px;top:844.2px;font-size:15.3px;line-height:20px;color:#929292;">0.50</span>
<span class="n" style="left:664px;top:844.2px;font-size:15.3px;line-height:20px;color:#929292;">0.50</span>
<span class="n" style="left:742px;top:844.2px;font-size:15.3px;line-height:20px;color:#929292;">0.50</span>
<span class="n" style="left:820px;top:844.2px;font-size:15.3px;line-height:20px;color:#929292;">0.50</span>
<span class="n" style="left:898px;top:844.2px;font-size:15.3px;line-height:20px;color:#929292;">0.50</span>
<span class="n" style="left:976px;top:844.2px;font-size:15.3px;line-height:20px;color:#929292;">0.50</span>
<span class="n" style="left:1054px;top:844.2px;font-size:15.3px;line-height:20px;color:#929292;">0.50</span>
<span class="n" style="left:1132px;top:844.2px;font-size:15.3px;line-height:20px;color:#929292;">0.50</span>
<div style="position:absolute;left:62px;top:345px;width:368px;height:1px;background:#e0e0e0;"></div>
<div style="position:absolute;left:62px;top:613px;width:368px;height:1px;background:#e0e0e0;"></div>
<div style="position:absolute;left:101px;top:291px;width:319px;height:1px;background:#e0e0e0;"></div>
<div style="position:absolute;left:101px;top:449px;width:319px;height:1px;background:#e0e0e0;"></div>
<div style="position:absolute;left:101px;top:503px;width:319px;height:1px;background:#e0e0e0;"></div>
<div style="position:absolute;left:101px;top:558px;width:319px;height:1px;background:#e0e0e0;"></div>
<div style="position:absolute;left:101px;top:718px;width:319px;height:1px;background:#e0e0e0;"></div>
<div style="position:absolute;left:101px;top:772px;width:319px;height:1px;background:#e0e0e0;"></div>
<div style="position:absolute;left:101px;top:827px;width:319px;height:1px;background:#e0e0e0;"></div>
<svg style="position:absolute;left:61.100px;top:204.400px" width="45" height="45" viewBox="0 0 45 45"><circle cx="22.500" cy="22.500" r="20.150" fill="none" stroke="#efb9bd" stroke-width="2"/><circle cx="22.500" cy="22.500" r="19.950" fill="none" stroke="#c3262e" stroke-width="3.300" stroke-dasharray="64 200" transform="rotate(87 22.500 22.500)"/><circle cx="22.500" cy="22.500" r="17.600" fill="#cfcfda"/></svg>
<svg style="position:absolute;left:73.6px;top:217px;" width="20" height="20" viewBox="0 0 24 24"><path fill="#212121" d="M12 5.900c1.160 0 2.100.940 2.100 2.100s-.940 2.100-2.100 2.100S9.900 9.160 9.900 8s.940-2.100 2.100-2.100m0 9c2.970 0 6.100 1.460 6.100 2.100v1.100H5.900V17c0-.640 3.130-2.100 6.100-2.100M12 4C9.790 4 8 5.790 8 8s1.790 4 4 4 4-1.790 4-4-1.790-4-4-4zm0 9c-2.670 0-8 1.340-8 4v3h16v-3c0-2.660-5.330-4-8-4z"/></svg>
<span id="t33" class="t" style="left:109.7px;top:216.5px;font-size:15.5px;line-height:20px;color:#272727;transform:scaleX(0.9827);transform-origin:0 50%;">Developer - Senior</span>
<svg style="position:absolute;left:401px;top:216.8px;" width="20" height="20" viewBox="0 0 24 24"><path fill="#212121" d="M16.59 8.59L12 13.17 7.41 8.59 6 10l6 6 6-6z"/></svg>
<span id="t34" class="t" style="left:109.7px;top:308.5px;font-size:15.5px;line-height:20px;color:#272727;transform:scaleX(0.9856);transform-origin:0 50%;">Rollout SAP HR</span>
<svg style="position:absolute;left:61.3px;top:362.5px" width="45" height="45" viewBox="0 0 45 45"><defs><clipPath id="ceva"><circle cx="22.500" cy="22.500" r="17.400"/></clipPath></defs><circle cx="22.500" cy="22.500" r="20.150" fill="none" stroke="#c4e4d6" stroke-width="2"/><circle cx="22.500" cy="22.500" r="19.950" fill="none" stroke="#44a383" stroke-width="3.300" stroke-dasharray="114.700 200" transform="rotate(87 22.500 22.500)"/><circle cx="22.500" cy="22.500" r="17.400" fill="#ececf6"/><g clip-path="url(#ceva)"><path d="M10 41V35.500C12 32.800 16 31.700 19 31.500L27 31.800C30 32 33.500 33 35.500 35.500V41Z" fill="#f5da2e"/><path d="M19.200 27.500L26.800 29.500L26.300 32.200C25 34.600 21.500 35 19 31.600Z" fill="#b98370"/><path d="M19.800 17.500C23 14.500 30 16 30.300 21C30.500 24 30 27.500 28.500 29.500C26.500 31 22 29.500 20 27Z" fill="#c08c78"/><path d="M18.500 25.300C14 24.500 12.500 19 14.200 14.500C16 9.800 22 8.300 26.500 10C31 11.700 32.500 16 31.200 19.500C29 17.800 26 17 23 17.500C21.500 19.500 20.500 22.500 18.500 25.300Z" fill="#1f2321"/><circle cx="17.900" cy="21.700" r="1.600" fill="#c08c78"/><circle cx="25.600" cy="22.300" r="1.900" fill="none" stroke="#4a3a32" stroke-width=".55"/><circle cx="29.800" cy="22.300" r="1.500" fill="none" stroke="#4a3a32" stroke-width=".5"/></g></svg>
<span id="t35" class="t" style="left:109.7px;top:365.5px;font-size:15.5px;line-height:20px;color:#272727;transform:scaleX(0.9867);transform-origin:0 50%;">Eva Smith</span>
<span id="t36" class="t" style="left:109.8px;top:385.3px;font-size:13px;line-height:18px;color:#757575;letter-spacing:0.312px;">Developer - Senior</span>
<svg style="position:absolute;left:401px;top:374.8px;" width="20" height="20" viewBox="0 0 24 24"><path fill="#212121" d="M16.59 8.59L12 13.17 7.41 8.59 6 10l6 6 6-6z"/></svg>
<span id="t37" class="t" style="left:109.7px;top:465.5px;font-size:15.5px;line-height:20px;color:#272727;transform:scaleX(0.9842);transform-origin:0 50%;">Run the Business (RTB)</span>
<svg style="position:absolute;left:401px;top:466.7px;" width="20" height="20" viewBox="0 0 24 24"><path fill="#212121" d="M16.59 8.59L12 13.17 7.41 8.59 6 10l6 6 6-6z"/></svg>
<span id="t38" class="t" style="left:123.4px;top:520.5px;font-size:15.5px;line-height:20px;color:#272727;transform:scaleX(0.9930);transform-origin:0 50%;">Software Engineering (RTB)</span>
<span id="t39" class="t" style="left:109.7px;top:575.5px;font-size:15.5px;line-height:20px;color:#272727;letter-spacing:0.273px;">Unified Communications Platform</span>
<svg style="position:absolute;left:61.1px;top:631.3px" width="45" height="45" viewBox="0 0 45 45"><defs><clipPath id="cmatt"><circle cx="22.500" cy="22.500" r="17.400"/></clipPath></defs><circle cx="22.500" cy="22.500" r="20.150" fill="none" stroke="#c4e4d6" stroke-width="2"/><circle cx="22.500" cy="22.500" r="19.950" fill="none" stroke="#44a383" stroke-width="3.300" stroke-dasharray="70.900 200" transform="rotate(87 22.500 22.500)"/><circle cx="22.500" cy="22.500" r="17.400" fill="#ececf6"/><g clip-path="url(#cmatt)"><path d="M9 41V35C11 32.800 15 31.700 18 31.500L27 32C30 32.200 32.500 33.200 34.500 35V41Z" fill="#4fcfba"/><path d="M16.700 20L24.500 22L25 34.500C23 37.800 19 37.500 17.300 33.500Z" fill="#b5806e"/><path d="M20 16C23 13.500 30 14.500 30.700 19.500C31 22.500 30.500 26 29.500 28C27 30.500 22 29 20.500 26Z" fill="#b98470"/><path d="M17 21.500C15.800 15 18 10.800 23 10.500C27.500 10.300 30.800 13 30.300 17C28 15.200 25 15 22.500 16C21 17.500 20.800 19.500 20.500 21.800C19.500 22.300 18 22.200 17 21.500Z" fill="#1f2321"/><path d="M20.300 22.500C20.500 26 22 28.800 25 29.800C27.500 30.500 29.500 29.500 29.800 26.500C29 24.800 27 24.300 25.800 24.800C24 25.500 22 24.800 20.300 22.500Z" fill="#1f2321"/><path d="M25.300 26.700C26.500 26 28 26 28.800 26.800C28 27.800 26.300 27.800 25.300 26.700Z" fill="#b98470"/><circle cx="24.300" cy="21.300" r="1.800" fill="none" stroke="#4a3a32" stroke-width=".55"/><circle cx="28.800" cy="21.300" r="1.500" fill="none" stroke="#4a3a32" stroke-width=".5"/></g></svg>
<span id="t40" class="t" style="left:109.7px;top:633.5px;font-size:15.5px;line-height:20px;color:#272727;letter-spacing:0.188px;">Matt Eagle</span>
<span id="t41" class="t" style="left:109.8px;top:654.2px;font-size:13px;line-height:18px;color:#757575;letter-spacing:0.312px;">Developer - Senior</span>
<svg style="position:absolute;left:401px;top:643.5px;" width="20" height="20" viewBox="0 0 24 24"><path fill="#212121" d="M16.59 8.59L12 13.17 7.41 8.59 6 10l6 6 6-6z"/></svg>
<span id="t42" class="t" style="left:109.7px;top:734.5px;font-size:15.5px;line-height:20px;color:#272727;transform:scaleX(0.9842);transform-origin:0 50%;">Run the Business (RTB)</span>
<svg style="position:absolute;left:401px;top:734.8px;" width="20" height="20" viewBox="0 0 24 24"><path fill="#212121" d="M16.59 8.59L12 13.17 7.41 8.59 6 10l6 6 6-6z"/></svg>
<span id="t43" class="t" style="left:123.4px;top:789.5px;font-size:15.5px;line-height:20px;color:#272727;transform:scaleX(0.9930);transform-origin:0 50%;">Software Engineering (RTB)</span>
<span id="t44" class="t" style="left:109.7px;top:844px;font-size:15.5px;line-height:20px;color:#272727;transform:scaleX(0.9868);transform-origin:0 50%;">Release Roadmap</span>
<svg style="position:absolute;left:401px;top:844.5px;" width="20" height="20" viewBox="0 0 24 24"><path fill="#212121" d="M16.59 8.59L12 13.17 7.41 8.59 6 10l6 6 6-6z"/></svg>
<div style="position:absolute;left:424px;top:510px;width:1px;height:7px;background:#444;"></div>
<div style="position:absolute;left:426px;top:510px;width:1px;height:7px;background:#444;"></div>
<div style="position:absolute;left:1210px;top:150px;width:16px;height:728px;background:#fafafa;"></div>
<svg style="position:absolute;left:1212px;top:154.500px" width="11" height="8" viewBox="0 0 11 8"><path d="M5.500 1L10 7H1z" fill="#8c8c8c"/></svg>
<svg style="position:absolute;left:1212px;top:865.500px" width="11" height="8" viewBox="0 0 11 8"><path d="M5.500 7L10 1H1z" fill="#8c8c8c"/></svg>
<div style="position:absolute;left:1213px;top:549px;width:9px;height:106px;background:#8b8b8b;border-radius:4.500px;"></div>
<div style="position:absolute;left:62px;top:877px;width:1163px;height:1px;background:#9e9e9e;"></div>
<div style="position:absolute;left:44px;top:878px;width:1181px;height:14px;background:#fafafa;"></div>
<svg style="position:absolute;left:48px;top:880.500px" width="8" height="10" viewBox="0 0 8 10"><path d="M.5 5L7.700 .5V9.500z" fill="#8c8c8c"/></svg>
<svg style="position:absolute;left:1213px;top:880.500px" width="8" height="10" viewBox="0 0 8 10"><path d="M7.500 5L.3 .5V9.500z" fill="#8c8c8c"/></svg>
<div style="position:absolute;left:62px;top:881px;width:1066px;height:9px;background:#8b8b8b;border-radius:4.500px;"></div>
</body></html>
